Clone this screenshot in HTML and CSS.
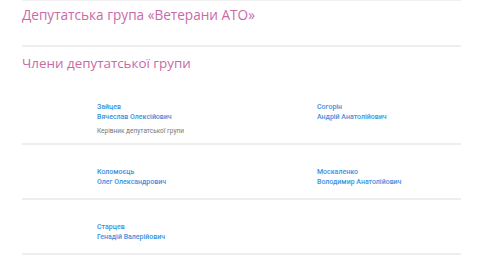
FILE: index.html
```html
<!DOCTYPE html>
<html lang="uk">
<head>
  <meta charset="UTF-8">
  <title>Депутатська група «Ветерани АТО»</title>
  <link rel="stylesheet" href="styles.css">
</head>
<body>

  <div class="page">
    <h1 class="title">Депутатська група «Ветерани АТО»</h1>

    <h2 class="subtitle">Члени депутатської групи</h2>

    <div class="row first">
      <div class="member">
        <a href="#">Зайцев<br>Вячеслав Олексійович</a>
        <div class="role">Керівник депутатської групи</div>
      </div>
      <div class="member">
        <a href="#">Согорін<br>Андрій Анатолійович</a>
      </div>
    </div>

    <div class="row">
      <div class="member">
        <a href="#">Коломоєць<br>Олег Олександрович</a>
      </div>
      <div class="member">
        <a href="#">Москаленко<br>Володимир Анатолійович</a>
      </div>
    </div>

    <div class="row">
      <div class="member">
        <a href="#">Старцев<br>Генадій Валерійович</a>
      </div>
    </div>
  </div>

</body>
</html>
```

FILE: styles.css
```css
body {
  margin: 0;
  background: #fff;
  font-family: "Open Sans", sans-serif;
}
.page {
  margin: 0 19px 0 22px;
  border-top: 1px solid #f0f0f0;
}
.title {
  font-size: 13.6px;
  line-height: 20px;
  font-weight: normal;
  color: #c86aa6;
  margin: 0;
  padding: 4px 0 20px;
  border-bottom: 2px solid #eee;
}
.subtitle {
  font-size: 13.4px;
  line-height: 18px;
  font-weight: normal;
  color: #c86aa6;
  margin: 0;
  padding: 7px 0 8px;
}
.row {
  display: grid;
  grid-template-columns: 220px 220px;
  height: 53px;
  border-bottom: 2px solid #eee;
}
.row.first {
  height: 63px;
}
.member {
  padding: 22px 0 0 75px;
  font-family: Roboto, sans-serif;
  font-size: 7px;
  line-height: 10px;
}
.member a {
  color: #3d8fe0;
  font-weight: 500;
  text-decoration: none;
}
.role {
  color: #777;
  font-size: 6.5px;
  margin-top: 4px;
}
```
